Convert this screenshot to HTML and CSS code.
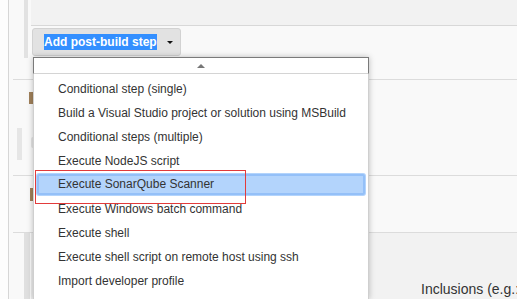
FILE: index.html
```html
<!DOCTYPE html>
<html lang="en">
<head>
  <meta charset="UTF-8">
  <title>Post-build Actions</title>
  <link rel="stylesheet" href="styles.css">
</head>
<body>

<div class="page">
  <div class="gutter"></div>

  <main class="content">
    <!-- Last build step and the add button -->
    <section class="step step-first">
      <div class="step-bar">
        <div class="step-panel"></div>
        <div class="button-row">
          <button class="post-build"><span class="selected">Add post-build step</span><span class="caret"></span></button>
        </div>
      </div>
    </section>

    <!-- Publisher section (mostly under the menu) -->
    <section class="step step-publisher">
      <div class="title-mark"></div>
      <div class="field-row">
        <div class="field-bar"></div>
        <div class="field-edge"></div>
      </div>
    </section>

    <section class="step step-sonar">
      <div class="title-mark slim"></div>
    </section>

    <!-- Configuration table -->
    <section class="step-config">
      <div class="config-bar"></div>
      <div class="config-bar light"></div>
      <div class="config-body">
        <div></div>
        <div class="config-label">Inclusions (e.g.:</div>
      </div>
    </section>
  </main>
</div>

<!-- Open dropdown menu of the button -->
<div class="dropdown">
  <div class="scroll-up"><span class="arrow-up"></span></div>
  <ul class="menu">
    <li>Conditional step (single)</li>
    <li>Build a Visual Studio project or solution using MSBuild</li>
    <li>Conditional steps (multiple)</li>
    <li>Execute NodeJS script</li>
    <li class="active">Execute SonarQube Scanner</li>
    <li>Execute Windows batch command</li>
    <li>Execute shell</li>
    <li>Execute shell script on remote host using ssh</li>
    <li>Import developer profile</li>
  </ul>
</div>

<!-- Red mark drawn on the screenshot -->
<div class="annotation"></div>

</body>
</html>
```

FILE: styles.css
```css
body {
  margin: 0;
  font-family: "Liberation Sans", Arial, sans-serif;
  color: #333;
  background-color: #f9f9f9;
  overflow: hidden;
}

.page {
  display: flex;
  height: 299px;
}

.gutter {
  width: 8px;
  background-color: #fdfdfd;
  border-right: 1px solid #d6d6d6;
}

.content {
  flex: 1;
  background-color: #f9f9f9;
}

.step {
  margin-left: 4px;
  border-bottom: 1px solid #dcdcdc;
}

/* First step: grey bar with panel and button */
.step-first {
  height: 79px;
  padding-left: 11px;
}

.step-bar {
  height: 58px;
  border-left: 4px solid #e2e2e2;
  padding-left: 3px;
}

.step-panel {
  height: 25px;
  background-color: #f2f2f2;
  border-bottom: 1px solid #d8d8d8;
}

.button-row {
  padding-top: 2px;
  padding-left: 1px;
}

button.post-build {
  display: flex;
  align-items: center;
  width: 149px;
  height: 28px;
  padding: 0 0 0 11px;
  background-color: #e2e2e2;
  border: 1px solid #d2d2d2;
  border-radius: 3px;
  font-family: "Liberation Sans", Arial, sans-serif;
  font-size: 12px;
  font-weight: bold;
  color: #333;
}

.selected {
  background-color: #338fff;
  color: #fff;
  line-height: 16px;
}

.caret {
  margin-left: 10px;
  border-left: 3px solid transparent;
  border-right: 3px solid transparent;
  border-top: 3px solid #111;
}

/* Publisher section */
.step-publisher {
  box-sizing: border-box;
  height: 96px;
  padding-top: 12px;
}

.title-mark {
  width: 4px;
  height: 12px;
  margin-left: 16px;
  background-color: #a0805a;
}

.title-mark.slim {
  width: 3px;
  height: 13px;
  margin-left: 17px;
}

.field-row {
  display: flex;
  margin-top: 24px;
}

.field-bar {
  width: 5px;
  height: 32px;
  margin-left: 4px;
  background-color: #e6e6e6;
}

.field-edge {
  width: 3px;
  height: 11px;
  margin: 9px 0 0 9px;
  background-color: #e4e4e4;
  border-radius: 2px 0 0 2px;
}

.step-sonar {
  box-sizing: border-box;
  height: 57px;
  padding-top: 12px;
}

/* Configuration table */
.step-config {
  display: flex;
  margin-left: 15px;
  height: 66px;
}

.config-bar {
  width: 6px;
  background-color: #e0e0e0;
}

.config-bar.light {
  width: 2px;
  margin-left: 1px;
  background-color: #ececec;
}

.config-body {
  flex: 1;
  display: grid;
  grid-template-columns: 388px 1fr;
  background-color: #f2f2f2;
  border-top: 1px solid #dcdcdc;
  margin-top: -1px;
}

.config-label {
  padding-top: 48px;
  font-size: 14px;
  line-height: 16px;
  white-space: nowrap;
  overflow: hidden;
}

/* Dropdown menu */
.dropdown {
  position: absolute;
  left: 33px;
  top: 57px;
  width: 336px;
  height: 242px;
  overflow: hidden;
  background-color: #fff;
  box-shadow: 0 0 6px rgba(0, 0, 0, 0.25);
}

.scroll-up {
  display: flex;
  justify-content: center;
  align-items: center;
  box-sizing: border-box;
  height: 17px;
  border: 1px solid #7a7a7a;
  border-bottom: 1px solid #d4d4d4;
}

.arrow-up {
  border-left: 4px solid transparent;
  border-right: 4px solid transparent;
  border-bottom: 4px solid #777;
}

.menu {
  list-style-type: none;
  margin: 0;
  padding: 3px 0 0;
  border-left: 1px solid #cfcfcf;
  border-right: 1px solid #cfcfcf;
  height: 100%;
}

.menu li {
  height: 24px;
  line-height: 24px;
  padding-left: 24px;
  font-size: 12px;
  color: #333;
  white-space: nowrap;
}

.menu li.active {
  margin: 0 2px;
  padding-left: 22px;
  height: 23px;
  line-height: 23px;
  margin-bottom: 1px;
  background-color: #b3d4fc;
  border-radius: 3px;
  outline: 2px solid #94c0f8;
  outline-offset: -3px;
}

.annotation {
  position: absolute;
  left: 35px;
  top: 170px;
  width: 209px;
  height: 32px;
  border: 1px solid #e23b3b;
}
```
